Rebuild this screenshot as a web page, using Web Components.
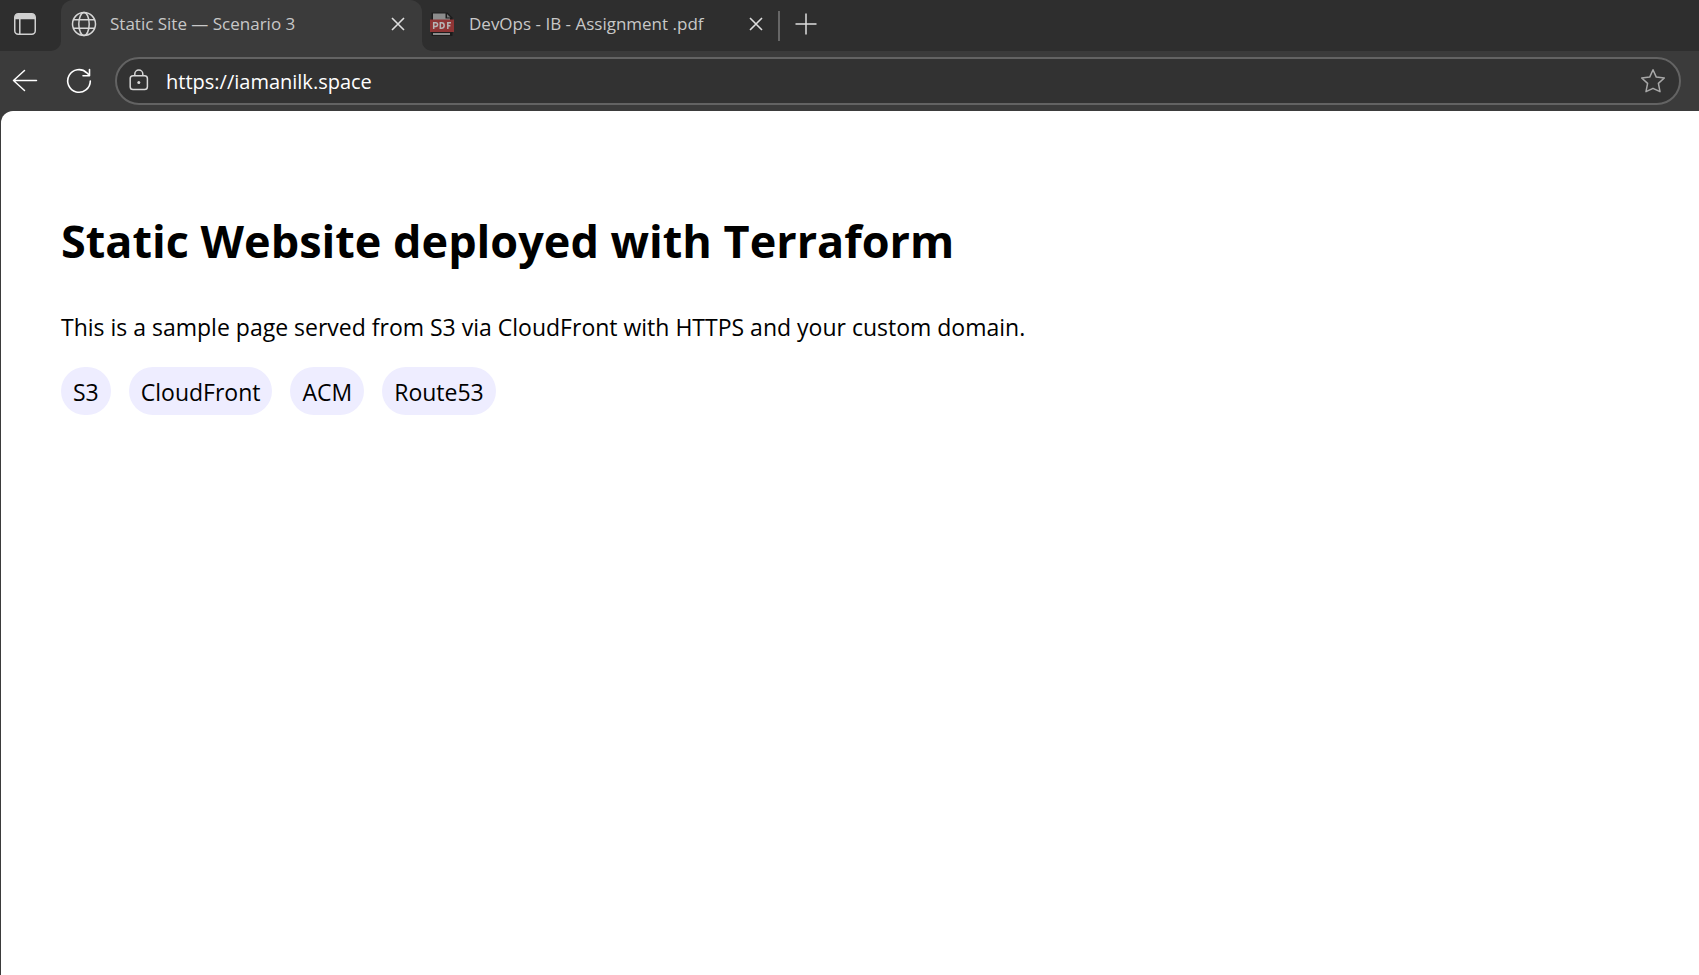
<!DOCTYPE html>
<html lang="en">
<head>
<meta charset="utf-8">
<meta name="viewport" content="width=device-width, initial-scale=1">
<title>Static Site — Scenario 3</title>
<style>
  html, body { margin: 0; min-height: 100vh; }
  body { display: flex; flex-direction: column; background: #3b3b3b; font-family: "Open Sans", "Noto Sans", sans-serif; }
</style>
</head>
<body>
<browser-window>
  <tab-strip slot="tabs">
    <browser-tab active>
      <svg slot="icon" width="26" height="26" viewBox="0 0 26 26" fill="none" stroke="#d6d6d6" stroke-width="1.5"><circle cx="13" cy="13" r="11.5"/><ellipse cx="13" cy="13" rx="5.2" ry="11.5"/><path d="M2.4 8.7h21.2M2.4 17.3h21.2"/></svg>
      Static Site — Scenario 3
    </browser-tab>
    <browser-tab>
      <pdf-icon slot="icon"></pdf-icon>
      DevOps - IB - Assignment .pdf
    </browser-tab>
  </tab-strip>
  <address-bar slot="toolbar" url="https://iamanilk.space"></address-bar>
  <site-page>
    <span slot="title">Static Website deployed with Terraform</span>
    This is a sample page served from S3 via CloudFront with HTTPS and your custom domain.
    <service-pill slot="services">S3</service-pill>
    <service-pill slot="services">CloudFront</service-pill>
    <service-pill slot="services">ACM</service-pill>
    <service-pill slot="services">Route53</service-pill>
  </site-page>
</browser-window>

<script>
const define = (name, html, setup) => customElements.define(name, class extends HTMLElement {
  constructor() {
    super();
    this.attachShadow({ mode: "open" }).innerHTML = html;
  }
  connectedCallback() { if (setup) setup(this, this.shadowRoot); }
});

const buttonReset = `
  button { display: flex; align-items: center; justify-content: center; flex: none; margin: 0; padding: 0; border: 0; background: none; color: inherit; font: inherit; }
  svg { display: block; flex: none; }`;

define("browser-window", `
  <style>
    :host { display: flex; flex-direction: column; flex: 1; }
    header { flex: none; }
    main { display: flex; flex: 1; margin-left: 1px; border-top-left-radius: 12px; background: #fff; color: #000; }
  </style>
  <header><slot name="tabs"></slot><slot name="toolbar"></slot></header>
  <main><slot></slot></main>`);

define("tab-strip", `
  <style>
    ${buttonReset}
    :host { display: flex; height: 51px; color: #d0d0d0; }
    .menu { width: 61px; padding: 0 11px 3px 0; box-sizing: border-box; background: #2e2e2e; border-bottom-right-radius: 10px; }
    nav { display: flex; }
    .rest { display: flex; align-items: center; flex: 1; background: #2e2e2e; }
    .divider { width: 2px; height: 30px; background: #666; }
    .add { width: 52px; height: 51px; padding-bottom: 4px; box-sizing: border-box; }
  </style>
  <button class="menu" aria-label="Tab actions menu">
    <svg width="22" height="22" viewBox="0 0 22 22" fill="none" stroke="#d0d0d0" stroke-width="1.5"><rect x=".75" y=".75" width="20.5" height="20.5" rx="3.5"/><path d="M5.8 6v15"/><path d="M1 6.3V4a3 3 0 0 1 3-3h14a3 3 0 0 1 3 3v2.3z" fill="#d0d0d0" stroke="none"/></svg>
  </button>
  <nav aria-label="Tabs"><slot></slot></nav>
  <div class="rest">
    <div class="divider"></div>
    <button class="add" aria-label="New tab"><svg width="22" height="22" viewBox="0 0 22 22" fill="none" stroke="#dedede" stroke-width="1.5"><path d="M11 .5v21M.5 11h21"/></svg></button>
  </div>`);

define("browser-tab", `
  <style>
    ${buttonReset}
    :host { display: block; width: 356px; background: #2e2e2e; font-size: 17px; line-height: 24px; color: #c8c8c8; border-bottom-left-radius: 10px; }
    :host([active]) { width: 361px; border-radius: 0; }
    .tab { display: flex; align-items: center; height: 51px; box-sizing: border-box; padding: 0 10px 3px 8px; }
    :host([active]) .tab { padding: 0 12px 3px 10px; background: #3b3b3b; border-radius: 12px 12px 0 0; }
    .title { flex: 1; margin-left: 15px; white-space: nowrap; }
    :host([active]) .title { margin-left: 13px; }
    .close { width: 24px; height: 24px; }
  </style>
  <div class="tab">
    <slot name="icon"></slot>
    <span class="title"><slot></slot></span>
    <button class="close" aria-label="Close tab"><svg width="14" height="14" viewBox="0 0 14 14" fill="none" stroke="#dedede" stroke-width="1.6"><path d="M1 1l12 12M13 1L1 13"/></svg></button>
  </div>`);

define("pdf-icon", `
  <style>:host, svg { display: block; }</style>
  <svg width="24" height="24" viewBox="0 0 24 24">
    <path d="M1.5.5h16l5 5V24h-21z" fill="#1c1c1c"/>
    <path d="M3 1.5h12.5v5H20V23H3z" fill="#8c8c8c"/>
    <path d="M17 2l3.5 3.5H17z" fill="#777"/>
    <path d="M0 7.5h24v12.5H0z" fill="#8f3535"/>
    <path d="M1.5 20h21v1h-21z" fill="#1c1c1c"/>
    <path d="M3.7 17v-6.2h2.1a1.7 1.7 0 0 1 0 3.6H3.7M10.3 10.8v5.4h1.2a2.7 2.7 0 0 0 0-5.4zM21 10.8h-3.2V17M17.8 13.8h2.6" fill="none" stroke="#b5b5b5" stroke-width="1.5"/>
  </svg>`);

define("address-bar", `
  <style>
    ${buttonReset}
    :host { display: flex; align-items: center; height: 60px; box-sizing: border-box; padding: 0 18px 0 0; background: #3b3b3b; color: #fff; }
    .nav { width: 54px; height: 48px; }
    .back { width: 50px; }
    .reload { width: 58px; }
    .field { display: flex; align-items: center; flex: 1; height: 48px; box-sizing: border-box; margin-left: 7px; padding: 0 13px 0 12px; border: 2px solid #636363; border-radius: 24px; background: #323232; }
    input { flex: 1; min-width: 0; margin: 0 0 0 17px; padding: 2px 0 0; border: 0; outline: 0; background: none; color: #fff; font: 20px/28px "Open Sans", "Noto Sans", sans-serif; }
  </style>
  <button class="nav back" aria-label="Back"><svg width="26" height="26" viewBox="0 0 26 26" fill="none" stroke="#fff" stroke-width="1.5" stroke-linecap="round" stroke-linejoin="round"><path d="M24.5 12.5H1.5M12.5 2.5l-11 10 11 10"/></svg></button>
  <button class="nav reload" aria-label="Refresh"><svg width="26" height="26" viewBox="0 0 26 26" fill="none" stroke="#fff" stroke-width="1.6" stroke-linecap="round" stroke-linejoin="round"><path d="M24.3 13A11.3 11.3 0 1 1 20.8 4.8L23.5 7.5M23.5 1.5v6.3h-6.5"/></svg></button>
  <div class="field">
    <button aria-label="View site information"><svg width="20" height="24" viewBox="0 0 20 24" fill="none" stroke="#d8d8d8" stroke-width="1.5"><rect x="1.2" y="6.8" width="17.2" height="13.8" rx="2.8"/><path d="M5.8 6.8V5a4 4 0 0 1 8 0v1.8"/><circle cx="9.8" cy="13.6" r="1.5" fill="#d8d8d8" stroke="none"/></svg></button>
    <input type="text" aria-label="Address and search bar" spellcheck="false">
    <button aria-label="Add to favorites"><svg width="26" height="26" viewBox="0 0 26 26" fill="none" stroke="#a8a8a8" stroke-width="1.5" stroke-linejoin="round"><path d="M13 1.8l3.3 7.3 8 .9-5.9 5.4 1.6 8.3L13 20.3l-7 3.4 1.6-8.3L1.7 10l8-.9z"/></svg></button>
  </div>`, (el, root) => { root.querySelector("input").value = el.getAttribute("url"); });

define("site-page", `
  <style>
    :host { display: block; flex: 1; padding: 60px; font-size: 23px; line-height: 32px; }
    h1 { margin: 38px 0; font-size: 45px; line-height: 64px; font-weight: 700; }
    p { margin: 0 0 24px; }
    .services { display: flex; flex-wrap: wrap; gap: 18px; }
  </style>
  <h1><slot name="title"></slot></h1>
  <p><slot></slot></p>
  <div class="services"><slot name="services"></slot></div>`);

define("service-pill", `
  <style>:host { display: block; padding: 9px 12px 7px; border-radius: 24px; background: #eeedff; }</style>
  <slot></slot>`);
</script>
</body>
</html>
